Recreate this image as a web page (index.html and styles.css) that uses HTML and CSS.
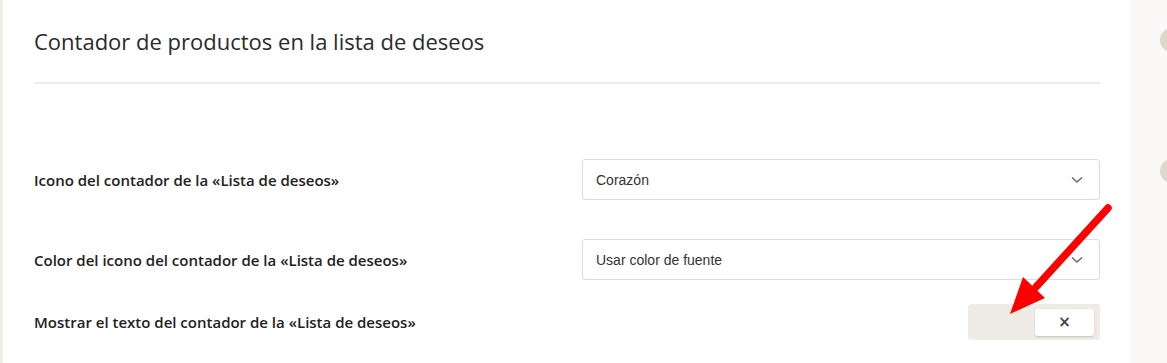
FILE: index.html
```html
<!DOCTYPE html>
<html lang="es">
<head>
<meta charset="utf-8">
<link rel="stylesheet" href="styles.css">
</head>
<body>
<div class="page">
  <div class="strip"></div>
  <main class="panel">
    <h2 class="title">Contador de productos en la lista de deseos</h2>
    <div class="rule"></div>
    <div class="rows">
      <div class="row">
        <label class="label">Icono del contador de la «Lista de deseos»</label>
        <div class="select"><span>Corazón</span><svg class="chev" width="12" height="8" viewBox="0 0 12 8"><path d="M1 1.5 L6 6 L11 1.5" fill="none" stroke="#6b6b6b" stroke-width="1.6"/></svg></div>
      </div>
      <div class="row">
        <label class="label">Color del icono del contador de la «Lista de deseos»</label>
        <div class="select"><span>Usar color de fuente</span><svg class="chev" width="12" height="8" viewBox="0 0 12 8"><path d="M1 1.5 L6 6 L11 1.5" fill="none" stroke="#6b6b6b" stroke-width="1.6"/></svg></div>
      </div>
      <div class="row row-toggle">
        <label class="label">Mostrar el texto del contador de la «Lista de deseos»</label>
        <div class="toggle"><div class="knob">×</div></div>
      </div>
    </div>
  </main>
  <aside class="side">
    <span class="dot dot1"></span>
    <span class="dot dot2"></span>
  </aside>
  <svg class="arrow" width="1167" height="363" viewBox="0 0 1167 363">
    <line x1="1108" y1="208" x2="1036" y2="287" stroke="#ff0000" stroke-width="7.5" stroke-linecap="round"/>
    <polygon points="1010,314 1023,277 1045,298" fill="#ff0000"/>
  </svg>
</div>
</body>
</html>
```
FILE: styles.css
```css
html, body {
  margin: 0;
  padding: 0;
}
body {
  width: 1167px;
  height: 363px;
  overflow: hidden;
  background: #faf9f7;
}
.page {
  position: relative;
  display: flex;
  width: 1167px;
  height: 363px;
}
.strip {
  width: 3px;
  background: #f1eee7;
  flex: none;
}
.panel {
  width: 1127px;
  flex: none;
  background: #ffffff;
  padding: 0 30px 0 31px;
  box-sizing: border-box;
}
.title {
  margin: 0;
  padding-top: 26px;
  font-family: "Open Sans", sans-serif;
  font-weight: 400;
  font-size: 22px;
  line-height: 30px;
  color: #2b2b2b;
  height: 30px;
}
.rule {
  margin-top: 26px;
  height: 2px;
  background: #ececec;
}
.rows {
  padding-top: 75px;
  display: flex;
  flex-direction: column;
}
.row {
  display: flex;
  align-items: center;
  justify-content: space-between;
  height: 41px;
  margin-bottom: 39px;
}
.row-toggle {
  height: 36px;
  margin-top: -15px;
}
.label {
  font-family: "Open Sans", sans-serif;
  font-weight: 600;
  font-size: 15px;
  color: #222;
}
.select {
  width: 518px;
  height: 41px;
  box-sizing: border-box;
  border: 1px solid #dcdcdc;
  border-radius: 3px;
  display: flex;
  align-items: center;
  justify-content: space-between;
  padding: 0 16px 0 13px;
  font-family: "Liberation Sans", Arial, sans-serif;
  font-size: 14px;
  color: #333;
  background: #fff;
}
.chev {
  display: block;
}
.toggle {
  width: 132px;
  height: 36px;
  box-sizing: border-box;
  background: #efece6;
  border-radius: 3px;
  display: flex;
  justify-content: flex-end;
  align-items: center;
  padding-right: 6px;
}
.knob {
  width: 59px;
  height: 27px;
  background: #fff;
  border-radius: 3px;
  box-shadow: 0 1px 2px rgba(0,0,0,0.18);
  display: flex;
  align-items: center;
  justify-content: center;
  font-family: "DejaVu Sans", sans-serif;
  font-weight: 700;
  font-size: 15px;
  color: #444;
}
.side {
  flex: 1;
  position: relative;
}
.dot {
  position: absolute;
  width: 24px;
  height: 24px;
  border-radius: 50%;
  background: #ddd8cc;
  left: 30px;
}
.dot1 { top: 28px; }
.dot2 { top: 159px; }
.arrow {
  position: absolute;
  left: 0;
  top: 0;
  pointer-events: none;
}
```
